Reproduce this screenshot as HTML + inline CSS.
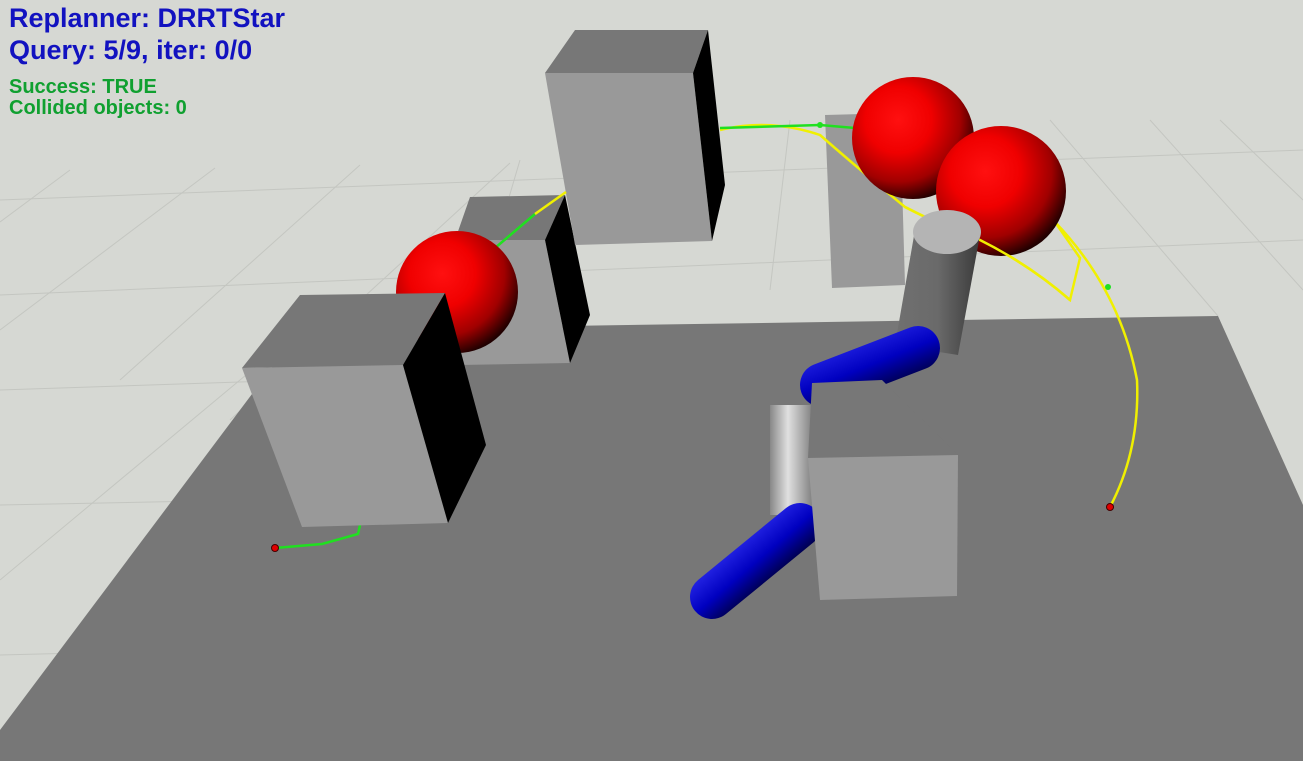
<!DOCTYPE html>
<html><head><meta charset="utf-8"><style>
html,body{margin:0;padding:0;width:1303px;height:761px;overflow:hidden;background:#d6d8d3}
svg{position:absolute;left:0;top:0}
.t{position:absolute;left:9px;font-family:"Liberation Sans",sans-serif;font-weight:bold;white-space:nowrap}
</style></head><body>
<svg width="1303" height="761" viewBox="0 0 1303 761">
<defs>
<radialGradient id="rs" cx="0.38" cy="0.35" r="0.68">
<stop offset="0" stop-color="#ff1010"/><stop offset="0.4" stop-color="#f00000"/><stop offset="0.75" stop-color="#a00000"/><stop offset="1" stop-color="#200000"/>
</radialGradient>
<linearGradient id="gc" x1="0" x2="1" y1="0" y2="0">
<stop offset="0" stop-color="#707070"/><stop offset="0.5" stop-color="#6a6a6a"/><stop offset="1" stop-color="#3a3a3a"/></linearGradient>
<linearGradient id="gc2" gradientUnits="userSpaceOnUse" x1="770" y1="0" x2="815" y2="0">
<stop offset="0" stop-color="#888"/><stop offset="0.4" stop-color="#e0e0e0"/><stop offset="1" stop-color="#777"/></linearGradient>
<linearGradient id="bc1" gradientUnits="userSpaceOnUse" x1="860" y1="340" x2="880" y2="390">
<stop offset="0" stop-color="#2020e0"/><stop offset="0.5" stop-color="#0000c0"/><stop offset="1" stop-color="#000050"/></linearGradient>
<linearGradient id="bc2" gradientUnits="userSpaceOnUse" x1="740" y1="545" x2="770" y2="580">
<stop offset="0" stop-color="#2020e0"/><stop offset="0.5" stop-color="#0000c0"/><stop offset="1" stop-color="#000050"/></linearGradient>
</defs>
<g stroke="#c4c6c1" stroke-width="1" fill="none">
<path d="M0 200 L1303 150"/><path d="M0 295 L1303 240"/><path d="M0 390 L300 380"/><path d="M0 505 L250 500"/><path d="M0 655 L120 652"/>
<path d="M0 222 L70 170"/><path d="M0 330 L215 168"/><path d="M120 380 L360 165"/><path d="M230 420 L510 163"/><path d="M0 580 L300 330"/>
<path d="M1150 120 L1303 290"/><path d="M1220 120 L1303 200"/><path d="M1050 120 L1218 316"/><path d="M770 290 L790 120"/><path d="M470 330 L520 160"/>
</g>
<polygon points="0,730 300,330 1218,316 1303,505 1303,761 0,761" fill="#777777"/>
<polygon points="825,115 900,113 905,285 832,288" fill="#999"/>
<polygon points="455,240 470,197 565,195 545,240" fill="#777"/>
<polygon points="455,240 545,240 570,363 460,365" fill="#999"/>
<polygon points="545,240 565,195 590,315 570,363" fill="#000"/>
<polygon points="545,73 575,30 708,30 693,73" fill="#777"/>
<polygon points="545,73 693,73 712,241 575,245" fill="#999"/>
<polygon points="693,73 708,30 725,185 712,241" fill="#000"/>
<g fill="none" stroke-width="2.5">
<path d="M720,130 Q770,118 820,135 Q860,170 905,207 Q950,230 980,240 Q1030,265 1070,300 L1080,258 L1055,222 Q1120,290 1137,380 Q1140,450 1110,507" stroke="#f0f000"/>
<path d="M720,128 L820,125 L855,128" stroke="#20e020"/>
<path d="M495,248 L535,214" stroke="#20e020"/>
<path d="M535,214 L566,192" stroke="#f0f000"/>
<path d="M275,548 L322,544 L358,534 L360,525" stroke="#20e020"/>
</g>
<circle cx="275" cy="548" r="3.5" fill="#e00000" stroke="#400" stroke-width="1"/>
<circle cx="1110" cy="507" r="3.5" fill="#e00000" stroke="#400" stroke-width="1"/>
<circle cx="1108" cy="287" r="3" fill="#20e020"/><circle cx="820" cy="125" r="3" fill="#20e020"/>
<circle cx="457" cy="292" r="61" fill="url(#rs)"/>
<circle cx="913" cy="138" r="61" fill="url(#rs)"/>
<circle cx="1001" cy="191" r="65" fill="url(#rs)"/>
<path d="M905,207 Q950,230 980,240 Q1030,265 1070,300" fill="none" stroke="#f0f000" stroke-width="2.5"/>
<polygon points="242,368 300,295 445,293 403,365" fill="#777"/>
<polygon points="242,368 403,365 448,523 302,527" fill="#999"/>
<polygon points="403,365 445,293 486,445 448,523" fill="#000"/>
<!-- arm -->
<polygon points="915,230 980,235 958,355 895,345" fill="url(#gc)"/>
<ellipse cx="947" cy="232" rx="34" ry="22" fill="#b4b4b4"/>
<line x1="822" y1="385" x2="918" y2="348" stroke="url(#bc1)" stroke-width="44" stroke-linecap="round"/>
<line x1="792" y1="405" x2="792" y2="515" stroke="url(#gc2)" stroke-width="44"/>
<line x1="712" y1="597" x2="800" y2="525" stroke="url(#bc2)" stroke-width="44" stroke-linecap="round"/>
<polygon points="812,383 882,380 958,455 808,458" fill="#777"/>
<polygon points="808,458 958,455 957,596 820,600" fill="#999"/>
</svg>
<div class="t" style="top:3px;font-size:27px;color:#1212c0">Replanner: DRRTStar</div>
<div class="t" style="top:35px;font-size:27px;color:#1212c0">Query: 5/9, iter: 0/0</div>
<div class="t" style="top:76px;font-size:20px;color:#10a030">Success: TRUE</div>
<div class="t" style="top:97px;font-size:20px;color:#10a030">Collided objects: 0</div>
</body></html>
